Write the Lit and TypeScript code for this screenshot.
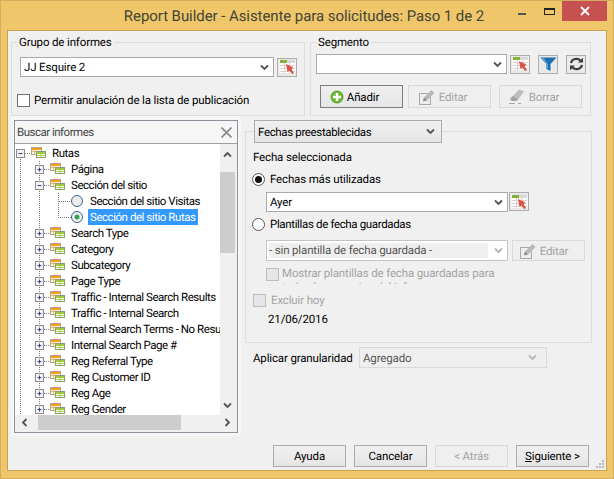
import { LitElement, html, css, svg } from "lit";
import { customElement } from "lit/decorators.js";

const chevron = (c = "#555") => html`<svg class="chev" width="9" height="7" viewBox="0 0 9 7"><path d="M1 1.5 L4.5 5 L8 1.5" fill="none" stroke=${c} stroke-width="1.8"/></svg>`;

const picker = html`<svg width="17" height="16" viewBox="0 0 17 16">
  <rect x="0.5" y="1" width="16" height="13" fill="#fff"/>
  <rect x="1" y="1" width="7" height="3" fill="#7fb539"/>
  <rect x="8" y="1" width="8" height="3" fill="#d9d9d9"/>
  <path d="M1 6.5H16M1 9.5H16M1 12.5H16M5.5 4V14M10.5 4V14" stroke="#e0d0cc" fill="none"/>
  <path d="M7 5 L14.5 8.5 L12.5 10 L15 14 L13 15 L10.5 11.5 L8.5 13 Z" fill="#dc5244"/>
</svg>`;

const funnel = html`<svg width="17" height="16" viewBox="0 0 17 16"><path d="M0.5 1.5H16.5L10.5 8V15L6.5 13V8Z" fill="#1f6fae"/><path d="M0.5 1.5H3.5L8 8V13.7L6.5 13V8Z" fill="#5aa2d6"/></svg>`;
const refresh = html`<svg width="15" height="14" viewBox="0 0 15 14"><path d="M2 6 A5.5 5 0 0 1 11.5 3.5" fill="none" stroke="#3c3c3c" stroke-width="2.2"/><path d="M9 5.5H14V0.8Z" fill="#3c3c3c"/><path d="M13 8 A5.5 5 0 0 1 3.5 10.5" fill="none" stroke="#3c3c3c" stroke-width="2.2"/><path d="M6 8.5H1V13.2Z" fill="#3c3c3c"/></svg>`;
const plus = html`<svg width="14" height="14" viewBox="0 0 14 14"><circle cx="7" cy="7" r="6.5" fill="#5da52f"/><circle cx="7" cy="7" r="5.5" fill="#6fb83a"/><path d="M7 3V11M3 7H11" stroke="#fff" stroke-width="2.4"/></svg>`;
const pencil = html`<svg width="18" height="18" viewBox="0 0 18 18"><rect x="1.5" y="5.5" width="11" height="11" fill="#eee" stroke="#a8a8a8"/><path d="M5 13 L6 9.5 L13.5 2 L16.5 5 L9 12.5 Z" fill="#b9b9b9"/><path d="M5 13.5 L6 9.5 L9 12.5 Z" fill="#8e8e8e"/></svg>`;
const eraser = html`<svg width="18" height="18" viewBox="0 0 18 18"><path d="M2 11 L11 1.5 L16 3.5 L9 13 H4 Z" fill="#bdbdbd"/><path d="M2 11 L5 8 L9.5 11 L8 13 H4 Z" fill="#a4a4a4"/><path d="M1 15.5H7M10 15.5H13" stroke="#a8a8a8"/></svg>`;

const tableIcon = (x: number) => svg`<g transform="translate(${x} 2)">
  <rect x="0.5" y="0.5" width="10" height="7" fill="#fff" stroke="#b5a27e"/>
  <rect x="1" y="1" width="9" height="2" fill="#f59c1a"/>
  <path d="M1 4.5H5M3.5 3V7" stroke="#f3b45a"/>
  <rect x="5.5" y="4.5" width="9" height="6" fill="#fff" stroke="#8a9a70"/>
  <rect x="6" y="5" width="8" height="2" fill="#9ccb3c"/>
  <path d="M6 8.5H14M10 7V10" stroke="#a9d24c"/>
</g>`;

const expander = (cx: number, open: boolean) => svg`
  <rect x=${cx - 4} y="4.5" width="8" height="8" fill="#f2f2f2" stroke="#8c8c8c"/>
  <path d=${open ? `M${cx - 2} 8.5H${cx + 2}` : `M${cx - 2} 8.5H${cx + 2}M${cx} 6.5V10.5`} stroke="#2f4a80" fill="none"/>`;

const dots = (d: string) => svg`<path d=${d} stroke="#7a7a7a" stroke-dasharray="1 1" fill="none" shape-rendering="crispEdges"/>`;

type Row = { t: string; l: 0 | 1 | 2; open?: boolean; radio?: boolean; sel?: boolean };
const rows: Row[] = [
  { t: "Rutas", l: 0, open: true },
  { t: "Página", l: 1 },
  { t: "Sección del sitio", l: 1, open: true },
  { t: "Sección del sitio Visitas", l: 2, radio: true },
  { t: "Sección del sitio Rutas", l: 2, radio: true, sel: true },
  ...["Search Type", "Category", "Subcategory", "Page Type", "Traffic - Internal Search Results", "Traffic - Internal Search", "Internal Search Terms - No Results", "Internal Search Page #", "Reg Referral Type", "Reg Customer ID", "Reg Age", "Reg Gender"].map((t) => ({ t, l: 1 as const })),
];

const rowSvg = (r: Row, i: number) => {
  const w = r.l === 0 ? 35 : r.l === 1 ? 54 : 73;
  return html`<svg class="guide" width=${w} height="16" viewBox="0 0 ${w} 16">
    ${dots(i === 0 ? "M5.5 8V16" : "M5.5 0V16")}
    ${r.l === 0 ? svg`${dots("M10 8.5H16")}${expander(5.5, true)}${tableIcon(16)}` : ""}
    ${r.l === 1 ? svg`${dots("M24.5 0V16M29 8.5H35")}${expander(24.5, !!r.open)}${tableIcon(35)}` : ""}
    ${r.l === 2 ? svg`${dots("M24.5 0V16")}${dots(r.sel ? "M43.5 0V8.5H56" : "M43.5 0V16M44 8.5H56")}
      <circle cx="62" cy="8" r="5.5" fill=${r.sel ? "#f4f4f4" : "#ececec"} stroke="#3f5f8f"/>
      ${r.sel ? svg`<circle cx="62" cy="8" r="2.5" fill="#2fa84f"/>` : ""}` : ""}
  </svg>`;
};

@customElement("app-root")
export class AppRoot extends LitElement {
  static styles = css`
    :host { display: block; width: 614px; height: 479px; overflow: hidden; font: 11.5px/16px Roboto, "Liberation Sans", Arial, sans-serif; letter-spacing: -0.15px; text-rendering: geometricPrecision; color: #000; }
    * { box-sizing: border-box; }
    .win { width: 614px; height: 479px; background: #efc76a; border: 1px solid #d4ad5e; display: flex; flex-direction: column; padding: 0 6px 7px; }
    .titlebar { height: 29px; flex: none; display: grid; grid-template-columns: 1fr auto 1fr; margin: 0 -6px; padding-right: 6px; }
    .title { grid-column: 2; font-size: 15px; line-height: 30px; letter-spacing: -0.07px; color: #454536; white-space: nowrap; }
    .ctrls { grid-column: 3; display: flex; justify-content: flex-end; height: 20px; }
    .min { width: 8px; height: 2px; background: #555; margin: 12px 18px 0 0; }
    .max { width: 11px; height: 7px; border: 1px solid #222; border-top-width: 2px; margin: 7px 7px 0 0; }
    .close { width: 45px; height: 20px; background: #c75050; display: flex; align-items: center; justify-content: center; }
    .client { flex: 1; position: relative; background: #f0f0f0; border: 1px solid #c9a352; padding: 3px 0 0 3px; display: flex; flex-direction: column; }
    .top { display: flex; gap: 5px; height: 82px; flex: none; }
    fieldset { margin: 0; min-width: 0; border: 1px solid #dcdcdc; }
    legend { padding: 0 2px; margin-left: -3px; height: 16px; white-space: nowrap; }
    .g1 { width: 294px; padding: 0 8px; }
    .g2 { width: 281px; padding: 0 5px; }
    .g2 legend { margin-left: 0; }
    .r { display: flex; align-items: center; }
    .g1 .r1 { margin-top: 7px; gap: 3px; }
    .combo { height: 20px; border: 1px solid #a9a9a9; background: #fff; display: flex; align-items: center; padding: 0 3px; justify-content: space-between; white-space: nowrap; flex: none; }
    .chev { flex: none; margin-right: 1px; }
    .ib { width: 20px; height: 19px; border: 1px solid #adadad; background: #e9e9e9; display: flex; align-items: center; justify-content: center; flex: none; }
    .w253 { width: 254px; }
    .chk { width: 13px; height: 13px; border: 1px solid #707070; background: #fff; flex: none; }
    .chk.off { background: #e6e6e6; border-color: #bcbcbc; }
    .perm { margin: 15px 0 0 -3px; gap: 4px; white-space: nowrap; }
    .g2 .r1 { margin-top: 4px; }
    .g2 .w191 { width: 191px; }
    .m3 { margin-left: 3px; } .m8 { margin-left: 8px; }
    .acts { margin: 11px 0 0 4px; }
    .btn { height: 23px; border: 1px solid #acacac; background: linear-gradient(#f0f0f0, #e5e5e5); display: flex; align-items: center; justify-content: center; flex: none; white-space: nowrap; }
    .btn.big { width: 83px; gap: 3px; padding-right: 14px; }
    .btn.def { border-color: #7d7d7d; }
    .btn.dis { border-color: #d9d9d9; background: #efefef; color: #a3a3a3; }
    .g5 { margin-left: 5px; } .g8 { margin-left: 8px; }
    .main { display: flex; height: 320px; flex: none; }
    .pane { width: 230px; background: #f6f6f6; padding: 4px 3px 3px; flex: none; }
    .panel { height: 313px; border: 1px solid #8f939e; display: flex; flex-direction: column; }
    .search { height: 23px; flex: none; display: flex; align-items: center; justify-content: space-between; padding: 0 5px 0 2px; border-bottom: 1px solid #a0a0a0; color: #444; letter-spacing: -0.5px; }
    .body { flex: 1; display: grid; grid-template-columns: 205px 15px; grid-template-rows: 271px 15px; padding-right: 2px; background: #f0f0f0; }
    .tree { background: #fff; overflow: hidden; padding-top: 1px; letter-spacing: -0.45px; }
    .row { height: 16px; display: flex; white-space: nowrap; }
    .row span { padding: 0 2px; height: 16px; line-height: 16px; }
    .guide { flex: none; }
    .row.sel span { background: #3399ff; color: #fff; }
    .vs { background: #f0f0f0; display: flex; flex-direction: column; align-items: center; justify-content: space-between; padding: 7px 0 6px; position: relative; }
    .vthumb { position: absolute; left: 0; right: 0; top: 28px; height: 81px; background: #cdcdcd; }
    .hs { grid-column: 1 / 3; background: #f0f0f0; display: flex; align-items: center; position: relative; justify-content: space-between; padding: 0 4px 0 6px; }
    .hthumb { position: absolute; top: 0; bottom: 0; left: 23px; width: 143px; background: #cdcdcd; }
    .right { margin: 4px 0 0 4px; width: 347px; flex: none; }
    .dates { padding: 0 0 0 8px; height: 223px; }
    .dates legend { margin: 0; padding: 0; height: 23px; }
    .drop { width: 188px; height: 23px; border: 1px solid #acacac; background: linear-gradient(#f0f0f0, #e5e5e5); display: flex; align-items: center; justify-content: space-between; padding: 0 5px 0 3px; letter-spacing: -0.35px; }
    .lbl { margin: 6px 0 0 -1px; }
    .radio { width: 13px; height: 13px; border-radius: 50%; border: 1px solid #555; background: #fff; flex: none; display: flex; align-items: center; justify-content: center; }
    .radio i { width: 7px; height: 7px; border-radius: 50%; background: #111; display: block; }
    .rr { margin: 6px 0 0 -2px; gap: 5px; height: 16px; }
    .c2 { margin: 5px 0 0 12px; align-items: flex-start; }
    .w242 { width: 242px; }
    .ib.tl { margin-left: 1px; }
    .rr2 { margin-top: 4px; letter-spacing: -0.35px; }
    .tpl { margin: 8px 0 0 12px; }
    .combo.dis { height: 21px; border-color: #c4c4c4; padding: 0 3px 0 2px; color: #555; }
    .combo.dis b { font-weight: 400; width: 219px; height: 15px; line-height: 15px; background: #efefef; }
    .btn.ed { width: 73px; height: 21px; margin-left: 4px; gap: 3px; padding-right: 10px; }
    .mostrar { margin: 5px 0 0 12px; gap: 3px; align-items: flex-start; height: 18px; overflow: hidden; color: #a3a3a3; line-height: 14px; }
    .mostrar .chk { margin-top: 2px; }
    .mostrar div:last-child { width: 224px; }
    .excl { margin: 8px 0 0 -1px; gap: 5px; color: #a3a3a3; height: 16px; }
    .date { margin: 3px 0 0 14px; }
    .gran { margin: 4px 0 0 8px; white-space: nowrap; }
    .gran span:first-child { width: 106px; flex: none; }
    .combo.agg { width: 188px; height: 21px; border-color: #d9d9d9; background: #efefef; color: #555; padding-right: 8px; }
    .foot { margin: 9px 0 0 0; padding-right: 17px; display: flex; justify-content: flex-end; gap: 8px; }
    .foot .btn { width: 73px; height: 22px; }
    .grip { position: absolute; right: 1px; bottom: 1px; }
    u { text-decoration: underline; }
  `;

  render() {
    return html`<div class="win">
      <div class="titlebar">
        <div class="title">Report Builder - Asistente para solicitudes: Paso 1 de 2</div>
        <div class="ctrls">
          <div class="min"></div><div class="max"></div>
          <div class="close"><svg width="10" height="10" viewBox="0 0 10 10"><path d="M1 1L9 9M9 1L1 9" stroke="#fff" stroke-width="1.8"/></svg></div>
        </div>
      </div>
      <div class="client">
        <div class="top">
          <fieldset class="g1">
            <legend>Grupo de informes</legend>
            <div class="r r1">
              <div class="combo w253"><span>JJ Esquire 2</span>${chevron()}</div>
              <div class="ib">${picker}</div>
            </div>
            <div class="r perm"><div class="chk"></div><span>Permitir anulación de la lista de publicación</span></div>
          </fieldset>
          <fieldset class="g2">
            <legend>Segmento</legend>
            <div class="r r1">
              <div class="combo w191"><span></span>${chevron()}</div>
              <div class="ib m3">${picker}</div>
              <div class="ib m8">${funnel}</div>
              <div class="ib m8">${refresh}</div>
            </div>
            <div class="r acts">
              <div class="btn big def">${plus}<span>Añadir</span></div>
              <div class="btn big dis g5">${pencil}<span>Editar</span></div>
              <div class="btn big dis g8">${eraser}<span>Borrar</span></div>
            </div>
          </fieldset>
        </div>
        <div class="main">
          <div class="pane"><div class="panel">
            <div class="search"><span>Buscar informes</span>
              <svg width="11" height="11" viewBox="0 0 11 11"><path d="M0.5 0.5L10.5 10.5M10.5 0.5L0.5 10.5" stroke="#8a8a8a" stroke-width="1.6"/></svg>
            </div>
            <div class="body">
              <div class="tree">
                ${rows.map((r, i) => html`<div class="row ${r.sel ? "sel" : ""}">${rowSvg(r, i)}<span>${r.t}</span></div>`)}
              </div>
              <div class="vs">
                <div class="vthumb"></div>
                <svg width="9" height="7" viewBox="0 0 9 7"><path d="M1 5.5L4.5 2L8 5.5" fill="none" stroke="#555" stroke-width="1.8"/></svg>
                <svg width="9" height="7" viewBox="0 0 9 7"><path d="M1 1.5L4.5 5L8 1.5" fill="none" stroke="#555" stroke-width="1.8"/></svg>
              </div>
              <div class="hs">
                <div class="hthumb"></div>
                <svg width="7" height="9" viewBox="0 0 7 9"><path d="M5.5 1L2 4.5L5.5 8" fill="none" stroke="#555" stroke-width="1.8"/></svg>
                <svg width="7" height="9" viewBox="0 0 7 9"><path d="M1.5 1L5 4.5L1.5 8" fill="none" stroke="#555" stroke-width="1.8"/></svg>
              </div>
            </div>
          </div></div>
          <div class="right">
            <fieldset class="dates">
              <legend><div class="drop"><span>Fechas preestablecidas</span>${chevron()}</div></legend>
              <div class="lbl">Fecha seleccionada</div>
              <div class="r rr"><div class="radio"><i></i></div><span>Fechas más utilizadas</span></div>
              <div class="r c2"><div class="combo w242"><span>Ayer</span>${chevron()}</div><div class="ib tl">${picker}</div></div>
              <div class="r rr rr2"><div class="radio"></div><span>Plantillas de fecha guardadas</span></div>
              <div class="r tpl">
                <div class="combo dis w242"><b>- sin plantilla de fecha guardada -</b>${chevron("#b5b5b5")}</div>
                <div class="btn dis ed">${pencil}<span>Editar</span></div>
              </div>
              <div class="r mostrar"><div class="chk off"></div><div>Mostrar plantillas de fecha guardadas para todos los usuarios del informe</div></div>
              <div class="r excl"><div class="chk off"></div><span>Excluir hoy</span></div>
              <div class="date">21/06/2016</div>
            </fieldset>
            <div class="r gran"><span>Aplicar granularidad</span>
              <div class="combo agg"><span>Agregado</span>${chevron("#b5b5b5")}</div>
            </div>
          </div>
        </div>
        <div class="foot">
          <div class="btn">Ayuda</div>
          <div class="btn">Cancelar</div>
          <div class="btn dis">&lt; Atrás</div>
          <div class="btn"><span><u>S</u>iguiente &gt;</span></div>
        </div>
        <svg class="grip" width="9" height="9" viewBox="0 0 9 9"><path d="M6 0h2v2h-2zM3 3h2v2h-2zM6 3h2v2h-2zM0 6h2v2h-2zM3 6h2v2h-2zM6 6h2v2h-2z" fill="#b8b8b8"/></svg>
      </div>
    </div>`;
  }
}
